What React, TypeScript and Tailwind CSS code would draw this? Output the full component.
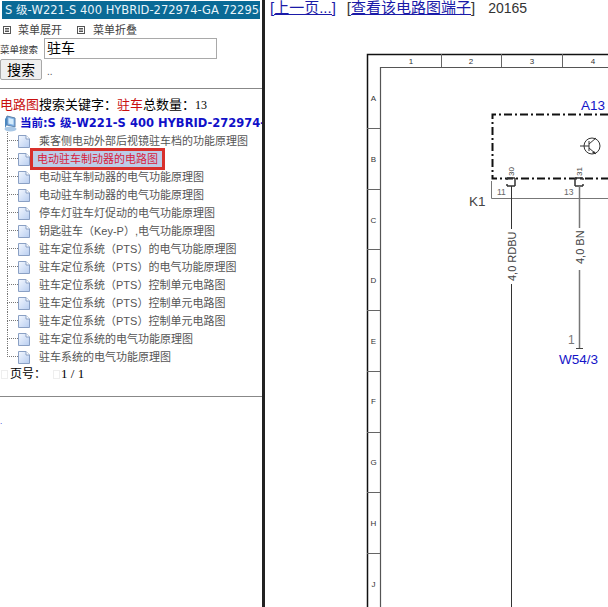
const cjk = '"Liberation Sans", "Noto Sans CJK SC", sans-serif';
const items = [
  '乘客侧电动外部后视镜驻车档的功能原理图',
  '电动驻车制动器的电路图',
  '电动驻车制动器的电气功能原理图',
  '电动驻车制动器的电气功能原理图',
  '停车灯驻车灯促动的电气功能原理图',
  '钥匙驻车（Key-P）,电气功能原理图',
  '驻车定位系统（PTS）的电气功能原理图',
  '驻车定位系统（PTS）的电气功能原理图',
  '驻车定位系统（PTS）控制单元电路图',
  '驻车定位系统（PTS）控制单元电路图',
  '驻车定位系统（PTS）控制单元电路图',
  '驻车定位系统的电气功能原理图',
  '驻车系统的电气功能原理图',
];

function Doc() {
  return (
    <svg width="12" height="13" viewBox="0 0 12 13" className="shrink-0">
      <defs>
        <linearGradient id="d" x1="0" y1="0" x2="1" y2="1">
          <stop offset="0" stopColor="#f4f8ff" />
          <stop offset="1" stopColor="#b7cdf0" />
        </linearGradient>
      </defs>
      <path d="M.5.5H8L11.5 4v8.5H.5z" fill="url(#d)" stroke="#8aa0c4" />
      <path d="M8 .5V4h3.5" fill="#fff" stroke="#8aa0c4" />
    </svg>
  );
}

function MenuIcon() {
  return (
    <svg width="8" height="8" viewBox="0 0 8 8" className="block shrink-0">
      <rect x=".5" y=".5" width="7" height="7" fill="#fff" stroke="#555" />
      <path d="M2 2.5h4M2 4h4M2 5.5h4" stroke="#555" />
    </svg>
  );
}

function Monitor() {
  return (
    <svg width="15" height="17" viewBox="0 0 15 17" className="shrink-0">
      <path d="M4 1l8 2v9l-8-2z" fill="#7fb2e6" stroke="#5a7fa8" />
      <path d="M5.500 3l5 1.300v5.500l-5-1.300z" fill="#d5ecfb" />
      <ellipse cx="7.500" cy="14" rx="6" ry="2.500" fill="#a9c8e6" />
      <path d="M2 4l2-3v9l-2 3z" fill="#4b87c0" />
    </svg>
  );
}

function Diagram() {
  const cols = [441, 501, 562, 622];
  const colLabels: [string, number][] = [['1', 411], ['2', 471], ['3', 532], ['4', 593]];
  const rows = [128, 189, 249, 310, 371, 432, 492, 553];
  const rowLabels: [string, number][] = [['A', 98], ['B', 159], ['C', 220], ['D', 280], ['E', 341], ['F', 401], ['G', 462], ['H', 523], ['J', 584]];
  return (
    <svg width="343" height="607" viewBox="265 0 343 607" className="block" style={{ fontFamily: '"Liberation Sans", sans-serif' }}>
      <path d="M367.500 607V54.500H608" fill="none" stroke="#111" strokeWidth="1.500" />
      <path d="M380.500 607V67.500H608" fill="none" stroke="#555" strokeWidth="1.200" />
      {cols.map((x) => <path key={x} d={`M${x}.5 54v13`} stroke="#666" />)}
      {rows.map((y) => <path key={y} d={`M367 ${y}.5h13`} stroke="#666" />)}
      {colLabels.map(([t, x]) => <text key={t} x={x} y={64} fontSize="8" fill="#333" textAnchor="middle">{t}</text>)}
      {rowLabels.map(([t, y]) => <text key={t} x={373.500} y={y + 3} fontSize="8" fill="#333" textAnchor="middle">{t}</text>)}

      <text x="581" y="110" fontSize="13.500" fill="#1414c8">A13</text>
      <path d="M608 114.500H492.500V178.500H608" fill="none" stroke="#111" strokeWidth="2" strokeDasharray="8 3 2 3" />
      <circle cx="592" cy="146" r="8" fill="none" stroke="#333" />
      <path d="M580 146h9M589 141v10M589 144l7-6M589 148l7 6" stroke="#333" fill="none" />
      <path d="M596 154l-4-1 2-2z" fill="#333" />

      <path d="M491.500 181V198.500H608" fill="none" stroke="#777" />
      <path d="M507 178h8M507 186h8M507 178v2M507 184v2M515 178v8" fill="none" stroke="#333" strokeWidth="1.500" />
      <path d="M575 178h8M575 186h8M575 178v8M583 178v2M583 184v2" fill="none" stroke="#333" strokeWidth="1.500" />

      <text x="469" y="206" fontSize="13.500" fill="#444">K1</text>
      <text x="497" y="195" fontSize="8.500" fill="#666">11</text>
      <text x="564" y="195" fontSize="8.500" fill="#666">13</text>
      <text transform="translate(514 176) rotate(-90)" fontSize="8" fill="#444">30</text>
      <text transform="translate(582 176) rotate(-90)" fontSize="8" fill="#444">31</text>

      <path d="M511.500 186V229M511.500 284V607" stroke="#333" fill="none" />
      <path d="M579.500 186V228M579.500 270V348" stroke="#777" strokeWidth="1.500" fill="none" />
      <path d="M576 348.500h7" stroke="#444" />
      <text transform="translate(516 281) rotate(-90)" fontSize="11" fill="#444">4,0 RDBU</text>
      <text transform="translate(584 264) rotate(-90)" fontSize="11" fill="#444">4,0 BN</text>
      <text x="568" y="344" fontSize="12" fill="#777">1</text>
      <text x="559" y="364" fontSize="13.500" fill="#1414c8">W54/3</text>
    </svg>
  );
}

function Missing({ className }: { className: string }) {
  return <span className={`inline-block h-[9px] w-[7px] shrink-0 border border-[#eee] ${className}`} />;
}

export default function App() {
  return (
    <div className="flex h-[607px] w-[608px] overflow-hidden bg-white" style={{ fontFamily: cjk }}>
      <aside className="box-content flex h-full w-[262px] shrink-0 flex-col overflow-hidden border-r-[3px] border-[#222]">
        <div className="mx-[2px] mt-[1px] h-[18px] shrink-0 overflow-hidden whitespace-nowrap bg-[#0a6a96] pl-[3px] text-[11.500px] leading-[18px] text-[#e8f4fa] [font-family:'DejaVu_Sans','Noto_Sans_CJK_SC',sans-serif]">
          S 级-W221-S 400 HYBRID-272974-GA 722950
        </div>
        <div className="mt-[5px] flex h-[12px] items-center pl-[3px] text-[11px] text-[#444]">
          <MenuIcon />
          <span className="ml-[7px]">菜单展开</span>
          <span className="ml-[15px]"><MenuIcon /></span>
          <span className="ml-[8px]">菜单折叠</span>
        </div>
        <div className="mt-[2px] flex items-center">
          <span className="w-[44px] whitespace-nowrap pt-[4px] text-[9.500px] text-[#333]">菜单搜索</span>
          <div className="h-[21px] w-[173px] border border-[#a9a9a9] pl-[2px] text-[14px] leading-[18px] text-black">驻车</div>
        </div>
        <div className="flex h-[21px] items-center">
          <button className="h-[21px] w-[42px] rounded-[2px] border border-[#a8a8a8] bg-[#efefef] text-[14px] leading-[18px] text-black">搜索</button>
          <span className="ml-[5px] mt-[4px] text-[10px] text-[#555]">..</span>
        </div>
        <hr className="mt-[8px] border-t border-[#888]" />
        <div className="mt-[7px] flex h-[18px] items-center whitespace-nowrap text-[13px] text-black">
          <span className="text-[#c81010]">电路图</span>
          <span>搜索关键字：</span>
          <span className="text-[#c81010]">驻车</span>
          <span>总数量：</span>
          <span className="text-[12px] [font-family:'Liberation_Serif',serif]">13</span>
        </div>
        <div className="flex h-[18px] items-center whitespace-nowrap pl-[3px] pt-px text-[11.500px] font-bold text-[#1010c8] [font-family:'DejaVu_Sans','Noto_Sans_CJK_SC',sans-serif]">
          <Monitor />
          <span className="ml-[2px]">当前:S 级-W221-S 400 HYBRID-272974-GA 722950</span>
        </div>
        <ul className="ml-[7px]">
          {items.map((t, i) => (
            <li key={i} className="flex h-[18px] items-center">
              <div className="h-full w-[11px] shrink-0">
                <div className="h-1/2 border-b border-l border-dotted border-[#777]" />
                <div className={`h-1/2 ${i < items.length - 1 ? 'border-l border-dotted border-[#777]' : ''}`} />
              </div>
              <Doc />
              {i === 1 ? (
                <span className="relative z-10 whitespace-nowrap border-[3px] border-[#d8302c] bg-[#bccde8] px-[4px] text-[11px] leading-[16px] text-[#d81c3c]">{t}</span>
              ) : (
                <span className="ml-[9px] whitespace-nowrap text-[11px] text-[#555]">{t}</span>
              )}
            </li>
          ))}
        </ul>
        <div className="-mt-px flex h-[18px] items-center pl-[1px] text-[12px] text-black">
          <Missing className="" />
          <span className="ml-[2px]">页号：</span>
          <Missing className="ml-[7px]" />
          <span className="ml-[1px] text-[13px] [font-family:'Liberation_Serif',serif]">1 / 1</span>
        </div>
        <hr className="mt-[13px] border-t border-[#888]" />
        <div className="mt-[21px] text-[8px] leading-[8px] text-[#1010c8]">.</div>
      </aside>
      <main className="relative min-w-0 flex-1">
        <div className="absolute left-0 top-0"><Diagram /></div>
        <div className="relative flex h-[16px] items-center whitespace-nowrap pl-[5px] text-[15px] text-[#333]">
          <span className="text-[#1a1aa8] underline">[上一页...]</span>
          <span className="ml-[11px]">[<span className="text-[#1a1aa8] underline">查看该电路图端子</span>]</span>
          <span className="ml-[13px] text-[14px]">20165</span>
        </div>
      </main>
    </div>
  );
}
